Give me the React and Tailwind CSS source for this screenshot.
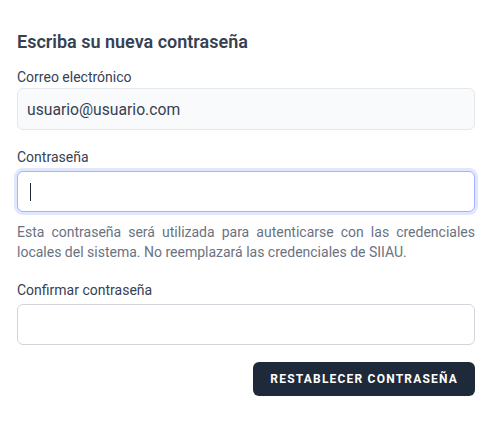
import React from 'react';

const App = () => {
  return (
    <div className="min-h-screen bg-white pl-[17px] pr-[15px] pt-[28px] font-['Roboto',sans-serif] text-gray-800">
      <h2 className="text-lg font-semibold leading-7 text-gray-700">Escriba su nueva contraseña</h2>

      <div className="mt-[11px]">
        <label className="block text-sm leading-5 text-gray-700">Correo electrónico</label>
        <input
          type="email"
          readOnly
          value="usuario@usuario.com"
          className="mt-[1px] block h-[42px] w-full rounded-md border border-gray-200 bg-gray-50 px-[9px] text-[15.7px] text-gray-700 outline-none"
        />
      </div>

      <div className="mt-[17px]">
        <label className="block text-sm leading-5 text-gray-700">Contraseña</label>
        <div className="mt-[4px] flex h-[41px] w-full items-center rounded-md border border-indigo-300 bg-white px-[12px] ring-[3px] ring-indigo-100">
          <span className="h-[18px] w-px bg-gray-800"></span>
        </div>
        <p className="mt-[10px] text-justify text-sm leading-5 text-gray-500">
          Esta contraseña será utilizada para autenticarse con las credenciales locales del sistema. No reemplazará las credenciales de SIIAU.
        </p>
      </div>

      <div className="mt-[18px]">
        <label className="block text-sm leading-5 text-gray-700">Confirmar contraseña</label>
        <input
          type="password"
          className="mt-[4px] block h-[41px] w-full rounded-md border border-gray-300 bg-white px-[10px] text-base outline-none"
        />
      </div>

      <div className="mt-[17px] flex justify-end">
        <button className="h-[34px] rounded-md bg-gray-800 px-[17px] text-xs font-bold uppercase tracking-widest text-white">
          Restablecer contraseña
        </button>
      </div>
    </div>
  );
};

export default App;
